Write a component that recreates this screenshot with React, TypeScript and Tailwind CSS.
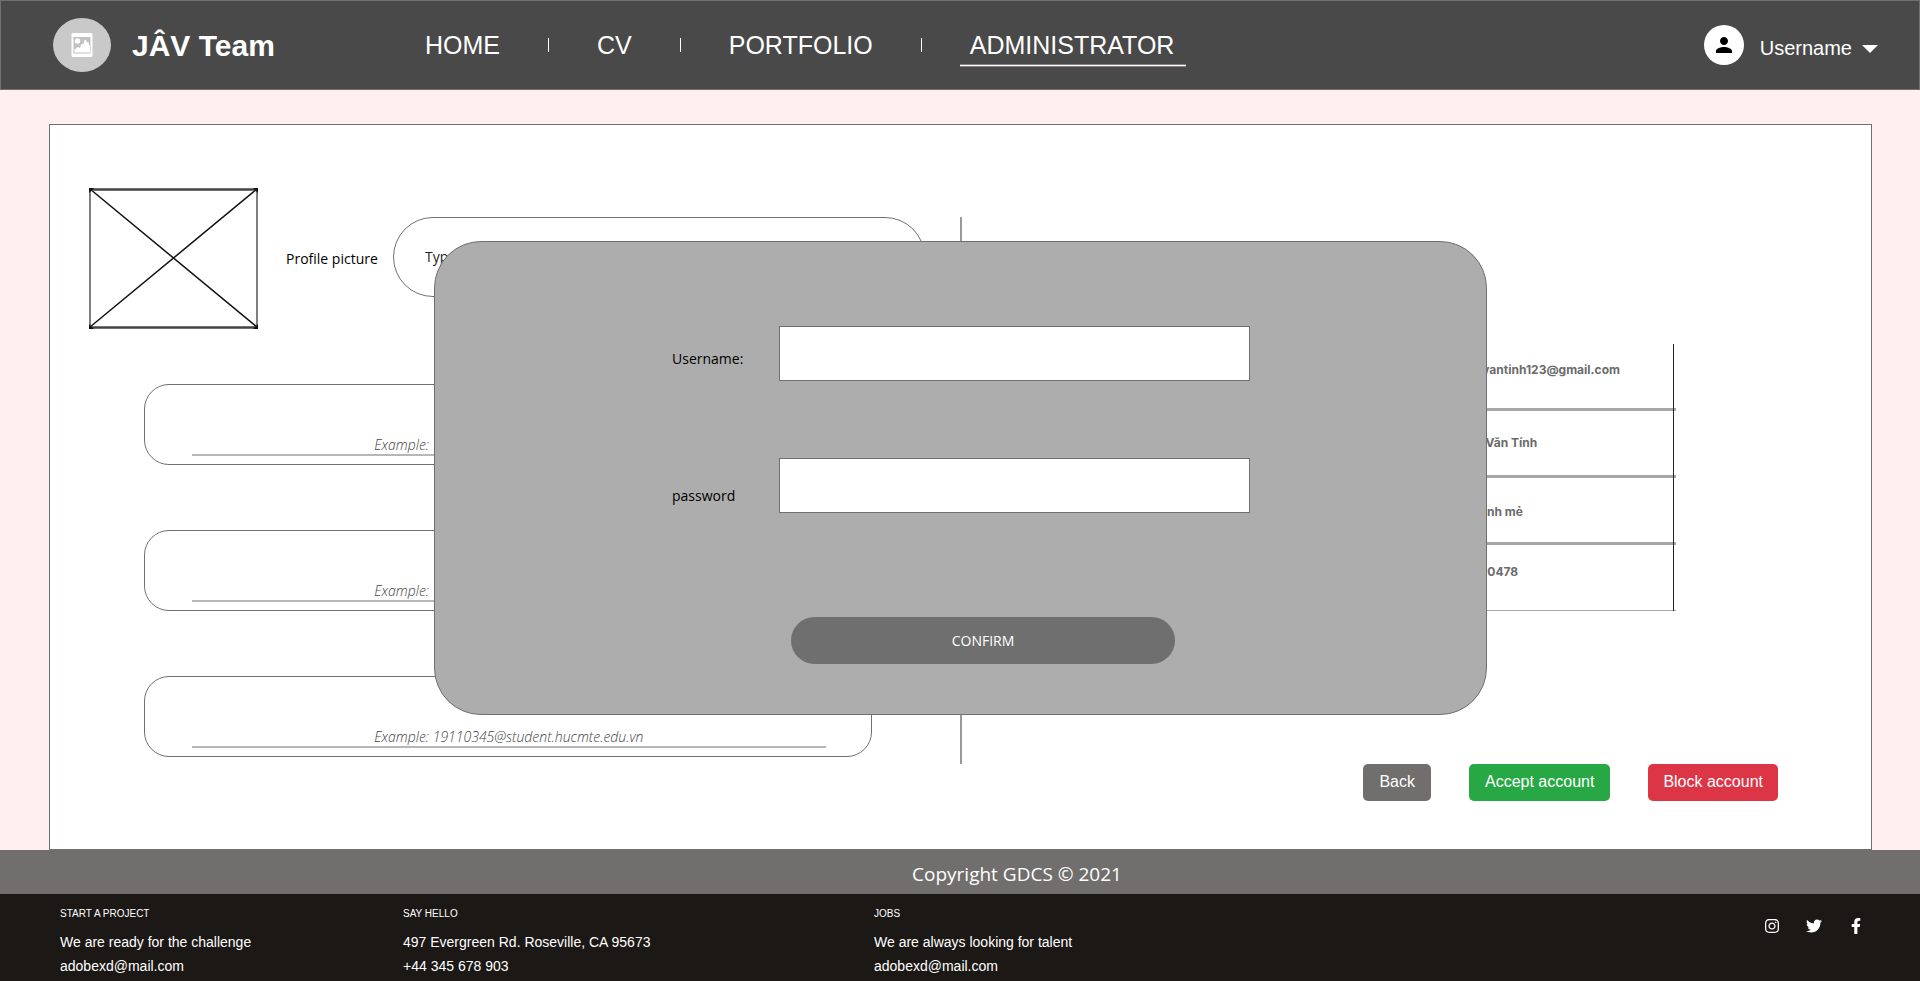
import React from "react";
import { FaFacebookF, FaInstagram, FaTwitter } from "react-icons/fa";
import { MdPerson } from "react-icons/md";

const navItems = ["HOME", "CV", "PORTFOLIO"];

function LogoMark() {
  return (
    <svg viewBox="0 0 58 54" className="h-[54px] w-[58px]" aria-hidden="true">
      <ellipse cx="29" cy="27" rx="29" ry="27" fill="#c9c9c9" />
      <rect x="18.5" y="15" width="21" height="24" rx="1.500" fill="#fff" />
      <rect x="20.5" y="19" width="17" height="16.500" fill="#c2c2c2" />
      <circle cx="24.5" cy="23" r="2.700" fill="#fff" />
      <path d="M21.500 34.500v-3l2-1.500 1.500-1 2 1 1.500-4h2l1-4h1.500l1 2.500 1.500-.5.500 3 1 .5v7z" fill="#fff" />
    </svg>
  );
}

function Header() {
  return (
    <header className="flex h-[90px] items-center border border-[#707070] bg-[#494949] pl-[52px] pr-[41px] text-white">
      <a href="#" className="flex w-[372px] items-center gap-[21px] text-[30px] font-bold leading-9">
        <LogoMark />
        <span className="pt-0.5">JÂV Team</span>
      </a>
      <nav className="flex items-center text-[25px] leading-8">
        {navItems.map((item) => (
          <React.Fragment key={item}>
            <a href="#">{item}</a>
            <span className="mx-12 h-[14px] w-px bg-white" />
          </React.Fragment>
        ))}
        <a href="#" className="relative">
          ADMINISTRATOR
          <span className="absolute -left-2.5 -right-3 top-[35px] h-[3px] border-y border-[#8a8280] bg-white" />
        </a>
      </nav>
      <button type="button" className="ml-auto flex items-center text-xl">
        <span className="flex size-10 items-center justify-center rounded-full bg-white">
          <MdPerson className="size-6 text-black" />
        </span>
        <span className="ml-4 mt-1.5">Username</span>
        <svg viewBox="0 0 16 8" className="ml-2.5 mt-2 h-2 w-4" aria-hidden="true">
          <path d="M0 0h16l-8 8z" fill="#fff" />
        </svg>
      </button>
    </header>
  );
}

function PicturePlaceholder() {
  return (
    <svg viewBox="0 0 169 141" className="h-[141px] w-[169px] shrink-0" role="img" aria-label="Profile picture">
      <path d="M1 1 168 139M168 1 1 139" stroke="#111" strokeWidth="1.5" />
      <path d="M1 0v141M168 0v141" stroke="#555" strokeWidth="1.5" />
      <path d="M0 1.500h169M0 139.500h169" stroke="#444" strokeWidth="2.500" />
      <path d="M0 0h5l-5 5zM169 0h-5l5 5zM0 141h5l-5-5zM169 141h-5l5-5z" fill="#111" />
    </svg>
  );
}

function ExampleField({ id }: { id: string }) {
  return (
    <div className="flex h-[81px] items-end rounded-[25px] border border-[#707070] pb-2 pl-[47px] pr-[45px]">
      <input
        id={id}
        aria-label="Example"
        placeholder="Example: 19110345@student.hucmte.edu.vn"
        className="h-[30px] w-full border-b-2 border-[#b7b7b7] bg-transparent pt-2 text-center font-['Open_Sans',sans-serif] text-sm font-light italic placeholder:text-[#444]"
      />
    </div>
  );
}

function ProfileForm() {
  return (
    <section className="pb-[92px] pt-[63px]">
      <div className="flex items-center pl-[39px] pr-[35px]">
        <PicturePlaceholder />
        <label htmlFor="picture" className="ml-7 w-[107px] shrink-0 font-['Open_Sans',sans-serif] text-sm text-black">
          Profile picture
        </label>
        <input
          id="picture"
          placeholder="Type"
          className="mb-1 h-20 min-w-0 flex-1 rounded-full border border-[#707070] px-[31px] font-['Open_Sans',sans-serif] text-sm placeholder:text-[#222]"
        />
      </div>
      <div className="mt-[55px] flex flex-col gap-[65px] pl-[94px] pr-[88px]">
        <ExampleField id="field-1" />
        <ExampleField id="field-2" />
        <ExampleField id="field-3" />
      </div>
    </section>
  );
}

const details = [
  { value: "buivantinh123@gmail.com", cell: "h-[67px] border-b-[3px] pb-3" },
  { value: "Bùi Văn Tính", cell: "h-[67px] border-b-[3px]" },
  { value: "A Tính mẻ", cell: "h-[67px] border-b-[3px] pt-1" },
  { value: "19110478", cell: "h-[66px] border-b pb-3" },
];

function AccountDetails() {
  return (
    <section className="flex flex-col justify-between pb-12 pt-[219px]">
      <div className="relative mr-[195px] self-end after:absolute after:inset-y-0 after:right-[2px] after:w-px after:bg-[#222]">
        <table className="w-[256px] border-separate border-spacing-0 font-['Inter',sans-serif] text-xs font-bold text-[#6b6b6b]">
          <tbody>
            {details.map(({ value, cell }) => (
              <tr key={value}>
                <td className={`border-[#a6a6a6] pl-11 align-middle leading-4 ${cell}`}>{value}</td>
              </tr>
            ))}
          </tbody>
        </table>
      </div>
      <div className="flex justify-end gap-[38px] pr-[93px] text-base leading-[21px] text-white">
        <button type="button" className="rounded-[5px] bg-[#706f6d] px-4 pb-[9px] pt-[7px]">Back</button>
        <button type="button" className="rounded-[5px] bg-[#28a745] px-4 pb-[9px] pt-[7px]">Accept account</button>
        <button type="button" className="rounded-[5px] bg-[#dc3545] px-[15px] pb-[9px] pt-[7px]">Block account</button>
      </div>
    </section>
  );
}

function LoginDialog() {
  return (
    <div className="absolute inset-x-0 top-[116px] flex justify-center">
      <form
        role="dialog"
        aria-label="CONFIRM"
        className="w-[1053px] rounded-[47px] border border-[#707070] bg-[#adadad] pb-[50px] pl-[237px] pr-[236px] pt-[84px] font-['Open_Sans',sans-serif] text-sm text-black"
      >
        <div className="grid grid-cols-[107px_1fr] items-center gap-y-[77px]">
          <label htmlFor="username" className="pt-2.5">Username:</label>
          <input id="username" className="h-[55px] border border-[#707070] bg-white px-3" />
          <label htmlFor="password" className="pt-5">password</label>
          <input id="password" type="password" className="h-[55px] border border-[#707070] bg-white px-3" />
        </div>
        <button
          type="button"
          className="ml-[119px] mt-[104px] h-[47px] w-[384px] rounded-full bg-[#6f6f6f] text-white"
        >
          CONFIRM
        </button>
      </form>
    </div>
  );
}

const footerColumns = [
  { title: "START A PROJECT", lines: ["We are ready for the challenge", "adobexd@mail.com"], width: "w-[343px]" },
  { title: "SAY HELLO", lines: ["497 Evergreen Rd. Roseville, CA 95673", "+44 345 678 903"], width: "w-[471px]" },
  { title: "JOBS", lines: ["We are always looking for talent", "adobexd@mail.com"], width: "w-[343px]" },
];

function Footer() {
  return (
    <footer className="text-white">
      <p className="flex h-11 items-center justify-center bg-[#706f6d] pl-[114px] pt-1 font-['Open_Sans',sans-serif] text-[19px]">
        Copyright GDCS © 2021
      </p>
      <div className="flex h-[87px] bg-[#1c1816] pl-[60px] pr-14 pt-3">
        {footerColumns.map(({ title, lines, width }) => (
          <div key={title} className={width}>
            <h2 className="text-[10px] leading-4">{title}</h2>
            <div className="mt-2 text-sm leading-6">
              {lines.map((line) => (
                <p key={line}>{line}</p>
              ))}
            </div>
          </div>
        ))}
        <div className="ml-auto flex items-start gap-[26px] pt-3 text-base">
          <a href="#" aria-label="Instagram"><FaInstagram /></a>
          <a href="#" aria-label="Twitter"><FaTwitter /></a>
          <a href="#" aria-label="Facebook"><FaFacebookF /></a>
        </div>
      </div>
    </footer>
  );
}

export default function App() {
  return (
    <div className="flex min-h-screen flex-col bg-[#fff0ef] font-['Liberation_Sans',Arial,sans-serif]">
      <Header />
      <main className="flex-1 pl-[49px] pr-12 pt-[34px]">
        <div className="relative grid grid-cols-[1fr_2px_1fr] border border-[#707070] bg-white">
          <ProfileForm />
          <div className="mb-[85px] mt-[92px] bg-[#999]" />
          <AccountDetails />
          <LoginDialog />
        </div>
      </main>
      <Footer />
    </div>
  );
}
